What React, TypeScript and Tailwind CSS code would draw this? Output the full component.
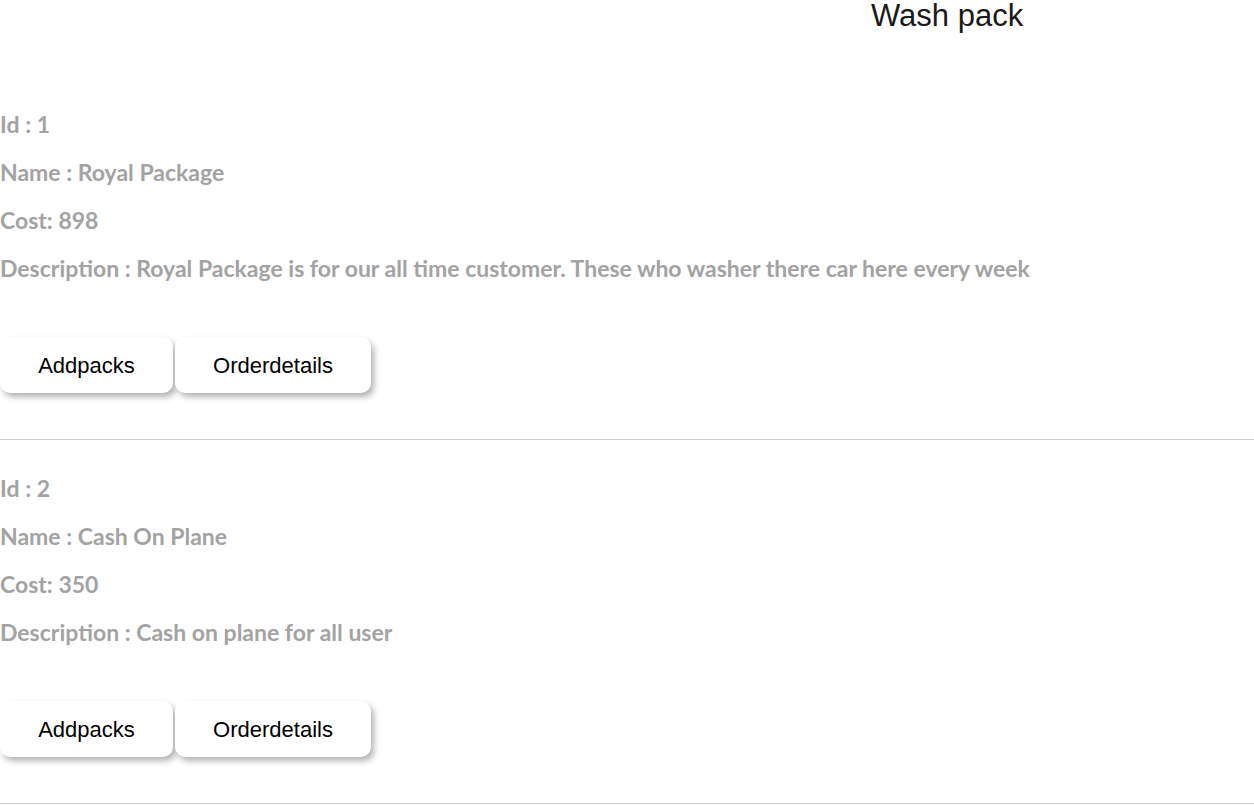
const packs = [
  {
    id: 1,
    name: "Royal Package",
    cost: 898,
    description:
      "Royal Package is for our all time customer. These who washer there car here every week",
  },
  { id: 2, name: "Cash On Plane", cost: 350, description: "Cash on plane for all user" },
];

function PackCard({ pack }: { pack: (typeof packs)[number] }) {
  return (
    <div className="border-b border-[#cccccc]">
      <div className="flex flex-col gap-5 pt-[34px] font-['Lato',sans-serif] text-[23px] leading-[28px] font-bold text-[#a3a3a3]">
        <p>Id : {pack.id}</p>
        <p>Name : {pack.name}</p>
        <p>Cost: {pack.cost}</p>
        <p>Description : {pack.description}</p>
      </div>
      <div className="flex gap-[2px] pt-[55px] pb-[46px] font-['Liberation_Sans',Arial,sans-serif] text-[22px] text-black">
        <button className="h-14 w-[173px] rounded-[10px] bg-white shadow-[3px_4px_6px_rgba(0,0,0,0.3)]">
          Addpacks
        </button>
        <button className="h-14 w-[196px] rounded-[10px] bg-white shadow-[3px_4px_6px_rgba(0,0,0,0.3)]">
          Orderdetails
        </button>
      </div>
    </div>
  );
}

export default function App() {
  return (
    <div className="min-h-screen bg-white">
      <h2 className="pl-[871px] font-['Liberation_Sans',Arial,sans-serif] text-[31px] leading-8 text-[#1a1a1a]">
        Wash pack
      </h2>
      <div className="pt-11">
        {packs.map((p) => (
          <PackCard key={p.id} pack={p} />
        ))}
      </div>
    </div>
  );
}
